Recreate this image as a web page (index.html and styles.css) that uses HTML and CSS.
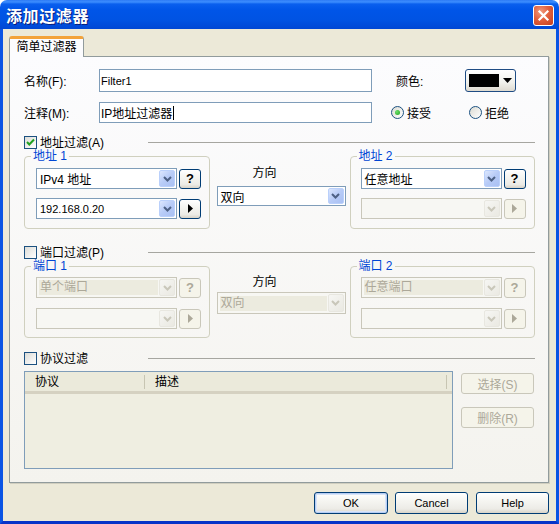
FILE: index.html
```html
<!DOCTYPE html>
<html lang="zh-CN">
<head>
<meta charset="utf-8">
<link rel="stylesheet" href="styles.css">
</head>
<body>
<div class="win">
  <div class="titlebar">
    <span class="title">添加过滤器</span>
    <span class="close"><svg width="13" height="13" viewBox="0 0 13 13"><path d="M2.5 2.5 L10.5 10.5 M10.5 2.5 L2.5 10.5" stroke="#fff" stroke-width="2.2" stroke-linecap="square"/></svg></span>
  </div>
  <div class="client">
    <div class="tab">简单过滤器</div>
    <div class="panel">
      <div class="row row-name">
        <span class="lbl">名称(F):</span>
        <div class="edit edit-name lat">Filter1</div>
        <span class="lbl lbl-color">颜色:</span>
        <div class="colorbtn"><span class="swatch"></span><svg class="tri" width="9" height="5" viewBox="0 0 9 5"><path d="M0 0 H9 L4.5 5 Z" fill="#000"/></svg></div>
      </div>
      <div class="row row-note">
        <span class="lbl">注释(M):</span>
        <div class="edit edit-note">IP地址过滤器<span class="caret"></span></div>
        <span class="radio r-accept"><span class="rb on"></span>接受</span>
        <span class="radio"><span class="rb"></span>拒绝</span>
      </div>

      <div class="sect sect-addr">
        <span class="cb on"><svg width="11" height="11" viewBox="0 0 11 11"><path d="M2 5 L4.3 7.5 L9 2.5" fill="none" stroke="#21A121" stroke-width="2"/></svg></span>
        <span class="sect-txt">地址过滤(A)</span>
        <span class="sect-line"></span>
      </div>
      <div class="grow grow-addr">
        <fieldset class="grp">
          <legend>地址 1</legend>
          <div class="ctl-row">
            <div class="combo"><span class="val">IPv4 地址</span><span class="dd"><svg width="9" height="6" viewBox="0 0 9 6"><path d="M1 1 L4.5 4.5 L8 1" fill="none" stroke="#4D6185" stroke-width="2"/></svg></span></div>
            <div class="btn sq q">?</div>
          </div>
          <div class="ctl-row r2">
            <div class="combo"><span class="val lat">192.168.0.20</span><span class="dd"><svg width="9" height="6" viewBox="0 0 9 6"><path d="M1 1 L4.5 4.5 L8 1" fill="none" stroke="#4D6185" stroke-width="2"/></svg></span></div>
            <div class="btn sq"><svg width="5" height="9" viewBox="0 0 5 9"><path d="M0 0 L5 4.5 L0 9 Z" fill="#000"/></svg></div>
          </div>
        </fieldset>
        <div class="dir">
          <div class="dir-lbl">方向</div>
          <div class="combo dir-combo"><span class="val">双向</span><span class="dd"><svg width="9" height="6" viewBox="0 0 9 6"><path d="M1 1 L4.5 4.5 L8 1" fill="none" stroke="#4D6185" stroke-width="2"/></svg></span></div>
        </div>
        <fieldset class="grp grp2">
          <legend>地址 2</legend>
          <div class="ctl-row">
            <div class="combo"><span class="val">任意地址</span><span class="dd"><svg width="9" height="6" viewBox="0 0 9 6"><path d="M1 1 L4.5 4.5 L8 1" fill="none" stroke="#4D6185" stroke-width="2"/></svg></span></div>
            <div class="btn sq q">?</div>
          </div>
          <div class="ctl-row r2">
            <div class="combo off"><span class="val"></span><span class="dd"><svg width="9" height="6" viewBox="0 0 9 6"><path d="M1 1 L4.5 4.5 L8 1" fill="none" stroke="#C9C7BA" stroke-width="2"/></svg></span></div>
            <div class="btn sq off"><svg width="5" height="9" viewBox="0 0 5 9"><path d="M0 0 L5 4.5 L0 9 Z" fill="#ACA899"/></svg></div>
          </div>
        </fieldset>
      </div>

      <div class="sect sect-port">
        <span class="cb"></span>
        <span class="sect-txt">端口过滤(P)</span>
        <span class="sect-line"></span>
      </div>
      <div class="grow grow-port">
        <fieldset class="grp">
          <legend>端口 1</legend>
          <div class="ctl-row">
            <div class="combo off"><span class="val"><span class="sel">单个端口</span></span><span class="dd"><svg width="9" height="6" viewBox="0 0 9 6"><path d="M1 1 L4.5 4.5 L8 1" fill="none" stroke="#C9C7BA" stroke-width="2"/></svg></span></div>
            <div class="btn sq q off">?</div>
          </div>
          <div class="ctl-row r2">
            <div class="combo off"><span class="val"></span><span class="dd"><svg width="9" height="6" viewBox="0 0 9 6"><path d="M1 1 L4.5 4.5 L8 1" fill="none" stroke="#C9C7BA" stroke-width="2"/></svg></span></div>
            <div class="btn sq off"><svg width="5" height="9" viewBox="0 0 5 9"><path d="M0 0 L5 4.5 L0 9 Z" fill="#ACA899"/></svg></div>
          </div>
        </fieldset>
        <div class="dir">
          <div class="dir-lbl">方向</div>
          <div class="combo dir-combo off"><span class="val"><span class="sel">双向</span></span><span class="dd"><svg width="9" height="6" viewBox="0 0 9 6"><path d="M1 1 L4.5 4.5 L8 1" fill="none" stroke="#C9C7BA" stroke-width="2"/></svg></span></div>
        </div>
        <fieldset class="grp grp2">
          <legend>端口 2</legend>
          <div class="ctl-row">
            <div class="combo off"><span class="val"><span class="sel">任意端口</span></span><span class="dd"><svg width="9" height="6" viewBox="0 0 9 6"><path d="M1 1 L4.5 4.5 L8 1" fill="none" stroke="#C9C7BA" stroke-width="2"/></svg></span></div>
            <div class="btn sq q off">?</div>
          </div>
          <div class="ctl-row r2">
            <div class="combo off"><span class="val"></span><span class="dd"><svg width="9" height="6" viewBox="0 0 9 6"><path d="M1 1 L4.5 4.5 L8 1" fill="none" stroke="#C9C7BA" stroke-width="2"/></svg></span></div>
            <div class="btn sq off"><svg width="5" height="9" viewBox="0 0 5 9"><path d="M0 0 L5 4.5 L0 9 Z" fill="#ACA899"/></svg></div>
          </div>
        </fieldset>
      </div>

      <div class="sect sect-proto">
        <span class="cb"></span>
        <span class="sect-txt">协议过滤</span>
        <span class="sect-line"></span>
      </div>
      <div class="proto-row">
        <div class="list">
          <div class="list-head">
            <span class="col col1">协议</span>
            <span class="col col2">描述</span>
          </div>
        </div>
        <div class="side-btns">
          <div class="btn wide off">选择(S)</div>
          <div class="btn wide off">删除(R)</div>
        </div>
      </div>
    </div>
    <div class="footer">
      <div class="btn fbtn def lat">OK</div>
      <div class="btn fbtn lat">Cancel</div>
      <div class="btn fbtn lat help">Help</div>
    </div>
  </div>
</div>
</body>
</html>
```

FILE: styles.css
```css
html, body {
  margin: 0;
  padding: 0;
  background: #ffffff;
}
body {
  width: 559px;
  height: 524px;
  overflow: hidden;
  font-family: "Liberation Sans", "Noto Sans CJK SC", sans-serif;
  font-size: 12px;
  color: #000;
}
.lat {
  font-size: 11px;
}
.win {
  width: 559px;
  height: 524px;
  display: flex;
  flex-direction: column;
}
.titlebar {
  height: 29px;
  flex: none;
  box-sizing: border-box;
  border-radius: 7px 7px 0 0;
  background: linear-gradient(to bottom, #2E7BF5 0px, #3D8EFF 2px, #0A5FEE 4px, #0055E8 10px, #0053E3 20px, #0047D4 29px);
  display: flex;
  align-items: center;
  justify-content: space-between;
  padding: 0 5px 0 6px;
}
.title {
  color: #fff;
  font-family: "Noto Sans CJK SC", sans-serif;
  font-weight: 700;
  font-size: 16px;
  letter-spacing: 0.6px;
  line-height: 18px;
  text-shadow: 1px 1px 0 #0A1C7A;
  margin-top: 1px;
}
.close {
  width: 19px;
  height: 19px;
  border: 1px solid #fff;
  border-radius: 3px;
  background: radial-gradient(circle at 35% 30%, #F09A7E 0%, #E2603E 45%, #C43D1C 100%);
  display: flex;
  align-items: center;
  justify-content: center;
  margin-top: 1px;
}
.client {
  flex: 1;
  background: #ECE9D8;
  border-left: 3px solid #0A54E4;
  border-right: 3px solid #0A54E4;
  border-bottom: 3px solid #0733C8;
  padding: 7px 7px 0 6px;
  display: flex;
  flex-direction: column;
}
.tab {
  position: relative;
  z-index: 1;
  width: 75px;
  height: 21px;
  box-sizing: border-box;
  margin-bottom: -1px;
  background: #FCFCFE;
  border: 1px solid #919B9C;
  border-bottom: none;
  border-top: 3px solid #F3A33A;
  border-radius: 3px 3px 0 0;
  text-align: center;
  line-height: 16px;
  font-size: 12px;
}
.panel {
  width: 540px;
  height: 427px;
  box-sizing: border-box;
  border: 1px solid #919B9C;
  background: linear-gradient(to bottom, #FCFCFE, #F4F3EE);
  box-shadow: 1px 1px 0 #D0CEBF;
  padding: 12px 13px 0 14px;
}
.row {
  display: flex;
  align-items: center;
}
.row-name {
  height: 23px;
}
.row-note {
  margin-top: 10px;
  height: 21px;
}
.lbl {
  width: 75px;
  flex: none;
}
.lbl-color {
  margin-left: 24px;
  width: 69px;
}
.edit {
  width: 273px;
  height: 100%;
  box-sizing: border-box;
  border: 1px solid #7F9DB9;
  background: #fff;
  padding-left: 1px;
  display: flex;
  align-items: center;
}
.caret {
  display: inline-block;
  width: 1px;
  height: 14px;
  background: #000;
  margin-left: 1px;
}
.colorbtn {
  width: 51px;
  height: 23px;
  box-sizing: border-box;
  border: 1px solid #1F4C84;
  border-radius: 3px;
  background: linear-gradient(to bottom, #FFFFFF, #F1F1EC 60%, #DEDAD0);
  display: flex;
  align-items: center;
  padding-left: 3px;
}
.swatch {
  width: 30px;
  height: 13px;
  background: #000;
}
.tri {
  margin-left: 4px;
}
.radio {
  display: flex;
  align-items: center;
  gap: 3px;
}
.r-accept {
  margin-left: 19px;
  width: 78px;
}
.rb {
  width: 11px;
  height: 11px;
  border: 1px solid #1C5180;
  border-radius: 50%;
  background: linear-gradient(135deg, #DCDBD3, #FFFFFF);
  display: flex;
  align-items: center;
  justify-content: center;
}
.rb.on::after {
  content: "";
  width: 5px;
  height: 5px;
  border-radius: 50%;
  background: radial-gradient(circle at 35% 35%, #6BE06B, #21A121);
}
.sect {
  display: flex;
  align-items: center;
  height: 13px;
}
.sect-addr {
  margin-top: 13px;
}
.sect-port {
  margin-top: 17px;
}
.sect-proto {
  margin-top: 14px;
}
.cb {
  width: 11px;
  height: 11px;
  flex: none;
  border: 1px solid #1C5180;
  background: linear-gradient(135deg, #DCDCD7, #FFFFFF);
  display: flex;
  align-items: center;
  justify-content: center;
}
.sect-txt {
  width: 108px;
  padding-left: 3px;
  line-height: 12px;
}
.sect-line {
  flex: 1;
  height: 1px;
  background: #A6A6A0;
  margin-top: -1px;
}
.grow {
  display: flex;
  align-items: flex-start;
}
.grow-addr {
  margin-top: 1px;
}
.grow-port {
  margin-top: 1px;
}
.grp {
  width: 186px;
  box-sizing: border-box;
  margin: 0;
  min-inline-size: 0;
  border: 1px solid #D0D0BF;
  border-radius: 4px;
  padding: 6px 8px 9px 11px;
}
.grow-port .grp {
  padding-top: 5px;
  padding-bottom: 8px;
}
.grp legend {
  color: #0046D5;
  padding: 0 2px;
  margin-left: -5px;
  line-height: 12px;
}
.grp2 {
  margin-left: 4px;
  padding-left: 10px;
}
.grp2 legend {
  margin-left: -4px;
}
.ctl-row {
  display: flex;
  align-items: center;
  gap: 2px;
  height: 21px;
}
.ctl-row.r2 {
  margin-top: 9px;
}
.grow-port .ctl-row.r2 {
  margin-top: 10px;
}
.combo {
  width: 141px;
  height: 21px;
  box-sizing: border-box;
  border: 1px solid #7F9DB9;
  background: #fff;
  display: flex;
  align-items: stretch;
  flex: none;
}
.combo .val {
  flex: 1;
  padding-left: 3px;
  display: flex;
  align-items: center;
  white-space: nowrap;
  overflow: hidden;
}
.combo .dd {
  width: 16px;
  margin: 1px;
  box-sizing: border-box;
  border-radius: 2px;
  border: 1px solid #BAD0FB;
  background: linear-gradient(135deg, #DCE7FE, #B7CBF7 50%, #A9C0F3);
  display: flex;
  align-items: center;
  justify-content: center;
}
.combo.off {
  border-color: #C9C7BA;
  background: #F7F7F3;
  color: #ACA899;
}
.combo.off .val {
  padding-left: 2px;
}
.combo.off .sel {
  background: #ECEBDF;
  flex: 1;
  height: 15px;
  line-height: 15px;
  padding-left: 1px;
}
.combo.off .dd {
  border-color: #E8E7E0;
  background: linear-gradient(135deg, #F6F6F3, #EAE9E2);
}
.btn {
  box-sizing: border-box;
  border: 1px solid #003C74;
  border-radius: 3px;
  background: linear-gradient(to bottom, #FFFFFF 0%, #F5F5F1 40%, #ECEBE6 80%, #D8D3C8 100%);
  display: flex;
  align-items: center;
  justify-content: center;
  flex: none;
}
.btn.off {
  border-color: #C9C7BA;
  background: #F5F4EA;
  color: #ACA899;
}
.sq {
  width: 22px;
  height: 20px;
}
.q {
  font-weight: 700;
  font-size: 13px;
}
.dir {
  width: 129px;
  margin-left: 7px;
  flex: none;
}
.dir-lbl {
  margin-top: 16px;
  line-height: 14px;
  padding-left: 36px;
}
.dir-combo {
  width: 129px;
  height: 20px;
  margin-top: 6px;
}
.grow-port .dir-lbl {
  margin-top: 15px;
}
.grow-port .dir-combo {
  height: 22px;
  margin-top: 3px;
}
.proto-row {
  display: flex;
  align-items: flex-start;
  margin-top: 6px;
}
.list {
  width: 429px;
  height: 98px;
  box-sizing: border-box;
  border: 1px solid #7F9DB9;
  background: #EFEEE1;
}
.list-head {
  height: 22px;
  box-sizing: border-box;
  background: #EBEADB;
  border-bottom: 3px solid #D5D1C1;
  display: flex;
  align-items: center;
  padding-top: 1px;
}
.col {
  height: 14px;
  line-height: 14px;
  padding-left: 10px;
  box-sizing: border-box;
}
.col1 {
  width: 120px;
  border-right: 1px solid #C7C5B2;
}
.col2 {
  width: 302px;
  border-right: 1px solid #C7C5B2;
}
.side-btns {
  margin-left: 8px;
  margin-top: 2px;
  display: flex;
  flex-direction: column;
  gap: 13px;
}
.wide {
  width: 73px;
  height: 21px;
}
.footer {
  display: flex;
  justify-content: flex-end;
  margin-top: 9px;
  gap: 8px;
}
.fbtn {
  width: 73px;
  height: 22px;
}
.fbtn.def {
  width: 74px;
  margin-right: -1px;
  box-shadow: inset 0 0 0 1px #B6CDF3, inset 0 0 0 2px #D8E4F8;
}
```
